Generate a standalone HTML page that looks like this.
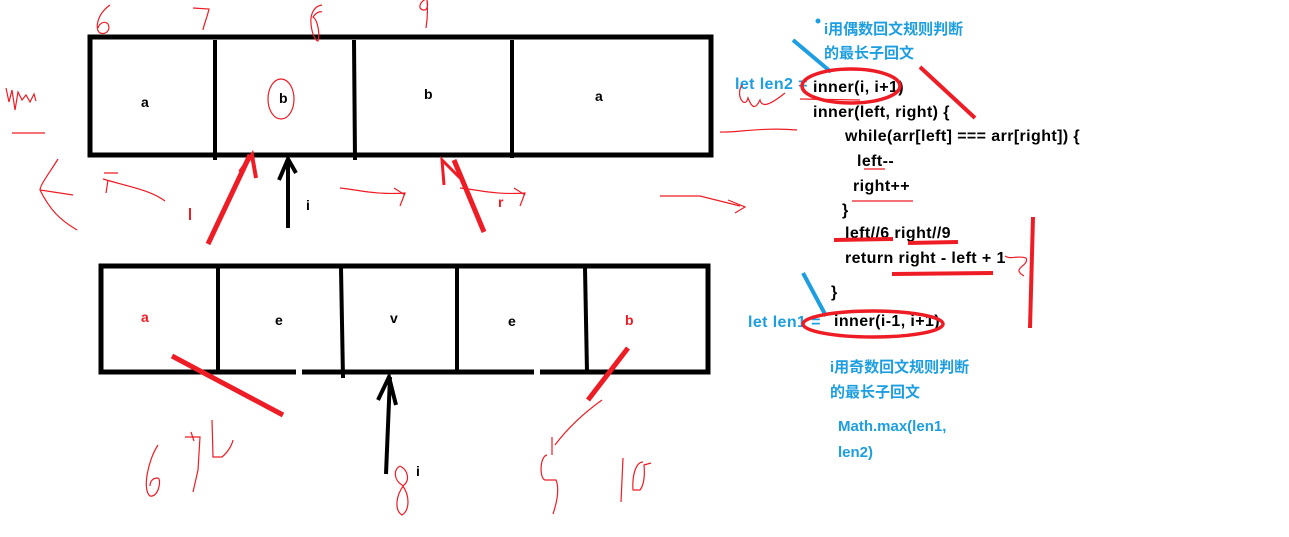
<!DOCTYPE html>
<html><head><meta charset="utf-8"><style>
html,body{margin:0;padding:0;background:#fff;}
svg{display:block}
text{font-family:"Liberation Sans","Noto Sans CJK SC",sans-serif;font-weight:bold;font-size:14px}
.c{font-size:16px;letter-spacing:0.4px}
.cn{font-size:15px}
.k{fill:#000}.b{fill:#1c9ee0}.r{fill:#ee1c24}
.th{fill:none;stroke:#ee1c24;stroke-width:1.2}
</style></head><body>
<svg width="1289" height="537" viewBox="0 0 1289 537">
<rect x="90" y="37" width="621" height="118" fill="none" stroke="#000" stroke-width="5"/>
<g stroke="#000" stroke-width="4">
<line x1="215" y1="40" x2="215" y2="160"/>
<line x1="354" y1="40" x2="355" y2="160"/>
<line x1="512" y1="40" x2="512" y2="158"/>
</g>
<text x="141" y="107" class="k">a</text>
<text x="279" y="103" class="k">b</text>
<text x="424" y="99" class="k">b</text>
<text x="595" y="101" class="k">a</text>
<ellipse cx="281" cy="99" rx="13" ry="20" class="th"/>
<path class="th" d="M110 5 C96 15 95 30 100 33 C106 35 111 30 108 24 C104 20 99 24 98 28"/>
<path class="th" d="M193 8 L209 9 C207 18 204 24 203 30"/>
<path class="th" d="M322 5 C314 6 310 14 311 24 C312 35 316 41 318 41 C320 35 318 20 313 17 C318 10 322 12 322 12"/>
<path class="th" d="M428 -2 C418 2 418 10 424 10 C428 10 428 4 427 0 C428 12 427 22 426 28"/>
<path class="th" d="M6 88 L9 102 L12 90 L15 110 L18 92 L22 100 L26 95 L30 102 L34 94 L36 101"/>
<path class="th" d="M12 133 L45 133"/>
<path class="th" d="M58 159 C50 172 40 185 40 190 L73 195 M40 190 C50 210 60 220 77 230"/>
<path class="th" d="M104 173 L118 173 M108 180 L106 193 M103 179 C130 187 150 190 165 201"/>
<path d="M190 208 L190 220" stroke="#ee1c24" stroke-width="2"/>
<path d="M208 244 L250 155" stroke="#ee1c24" stroke-width="5" fill="none"/>
<path d="M240 172 L252 155 L256 178" stroke="#ee1c24" stroke-width="4" fill="none"/>
<path d="M484 232 L454 160" stroke="#ee1c24" stroke-width="5" fill="none"/>
<path d="M444 185 L442 160 L460 178" stroke="#ee1c24" stroke-width="3" fill="none"/>
<path class="th" d="M340 188 C360 190 375 195 405 193 L400 206 M394 188 L405 195"/>
<path class="th" d="M460 188 C480 190 495 195 525 193 L520 206 M514 188 L525 195"/>
<text x="498" y="207" class="r">r</text>
<path d="M288 228 L288 160 M279 180 L288 159 L296 173" stroke="#000" stroke-width="4" fill="none"/>
<text x="306" y="210" class="k">i</text>
<path class="th" d="M720 132 C735 133 760 127 797 130 M660 196 L700 196 L740 206 M728 200 L745 207 L735 213"/>
<rect x="101" y="266" width="607" height="106" fill="none" stroke="#000" stroke-width="5"/>
<g stroke="#000" stroke-width="4">
<line x1="218" y1="268" x2="218" y2="372"/>
<line x1="341" y1="268" x2="343" y2="378"/>
<line x1="457" y1="268" x2="457" y2="372"/>
<line x1="585" y1="268" x2="587" y2="372"/>
</g>
<text x="141" y="322" class="r">a</text>
<text x="275" y="325" class="k">e</text>
<text x="390" y="323" class="k">v</text>
<text x="508" y="326" class="k">e</text>
<text x="625" y="325" class="r">b</text>
<path d="M172 356 L283 415" stroke="#ee1c24" stroke-width="5"/>
<path d="M628 348 L588 400" stroke="#ee1c24" stroke-width="5"/>
<rect x="296" y="366" width="6" height="10" fill="#fff"/>
<rect x="534" y="366" width="6" height="10" fill="#fff"/>
<path d="M386 474 L390 377 M378 400 L389 377 L396 405" stroke="#000" stroke-width="4" fill="none"/>
<text x="416" y="476" class="k">i</text>
<path class="th" d="M158 445 C148 460 142 490 150 496 C158 498 162 480 158 478 C152 478 150 482 150 486"/>
<path class="th" d="M185 437 L200 437 L198 470 L193 492 M191 432 L194 441"/>
<path class="th" d="M212 420 L213 457 L222 457 C228 452 232 445 233 440"/>
<path class="th" d="M400 466 C393 470 394 480 402 485 C410 495 410 510 402 515 C394 510 396 495 404 485 C410 480 408 470 400 466"/>
<path class="th" d="M547 455 C540 456 539 478 545 480 L556 480 C560 490 556 505 553 514"/>
<path class="th" d="M552 437 L552 455 M555 445 C570 425 588 410 602 400"/>
<path class="th" d="M623 458 L621 502 M643 462 C636 462 632 475 633 490 L640 490 C644 485 645 475 644 465 L651 463"/>
<text x="813" y="92" class="k c">inner(i, i+1)</text>
<text x="813" y="117" class="k c">inner(left, right) {</text>
<text x="845" y="141" class="k c">while(arr[left] === arr[right]) {</text>
<text x="857" y="166" class="k c">left--</text>
<text x="853" y="191" class="k c">right++</text>
<text x="842" y="215" class="k c">}</text>
<text x="845" y="238" class="k c">left//6  right//9</text>
<text x="845" y="263" class="k c">return right - left + 1</text>
<text x="831" y="297" class="k c">}</text>
<text x="834" y="326" class="k c">inner(i-1, i+1)</text>
<text x="735" y="89" class="b c">let len2 =</text>
<text x="748" y="327" class="b c">let len1 =</text>
<text x="824" y="34" class="b cn">i用偶数回文规则判断</text>
<text x="824" y="58" class="b cn">的最长子回文</text>
<text x="830" y="372" class="b cn">i用奇数回文规则判断</text>
<text x="830" y="397" class="b cn">的最长子回文</text>
<text x="838" y="431" class="b cn">Math.max(len1,</text>
<text x="838" y="457" class="b cn">len2)</text>
<circle cx="818" cy="21" r="2.5" fill="#1c9ee0"/>
<path d="M793 40 L831 72" stroke="#1c9ee0" stroke-width="4"/>
<path d="M803 273 L826 316" stroke="#1c9ee0" stroke-width="4"/>
<ellipse cx="851" cy="86" rx="49" ry="17" fill="none" stroke="#ee1c24" stroke-width="3.5"/>
<ellipse cx="873" cy="324" rx="70" ry="13" fill="none" stroke="#ee1c24" stroke-width="3.5"/>
<path d="M920 67 L975 118" stroke="#ee1c24" stroke-width="4"/>
<path d="M1033 217 L1030 328" stroke="#ee1c24" stroke-width="4"/>
<path d="M834 240 L893 239 M908 243 L958 242 M892 274 L993 273" stroke="#ee1c24" stroke-width="4"/>
<path class="th" d="M800 99 L860 100 M864 169 L885 169 M852 201 L913 201 M1005 256 C1010 260 1018 255 1026 258 C1030 266 1010 268 1024 276"/>
<path class="th" d="M742 85 C735 95 745 110 748 98 C752 108 755 110 760 100 C762 108 770 105 785 93"/>
</svg>
</body></html>
